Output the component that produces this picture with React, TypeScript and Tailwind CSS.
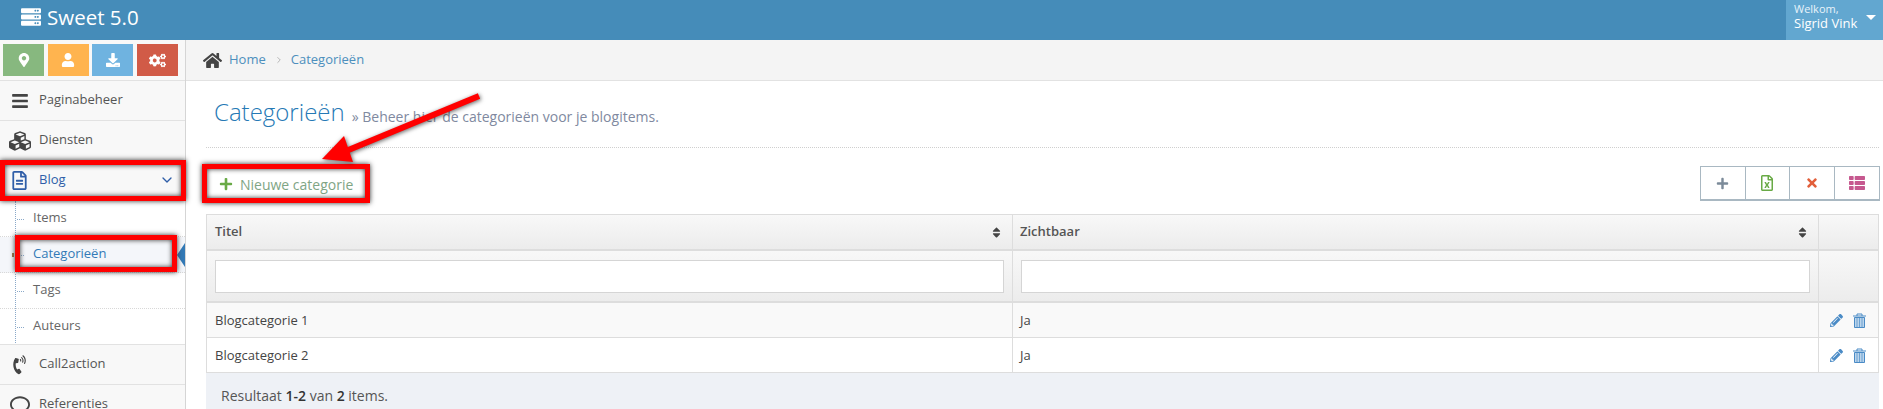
import { FaCogs, FaCubes, FaDownload, FaHome, FaMapMarkerAlt, FaPencilAlt, FaPlus, FaRegComment, FaRegFileAlt, FaRegFileExcel, FaServer, FaSort, FaThList, FaTimes, FaUser, FaBars, FaPhoneVolume } from "react-icons/fa";
import { LuChevronDown, LuChevronRight } from "react-icons/lu";

function TrashIcon() {
  return (
    <svg width="13" height="15" viewBox="0 0 13 15" className="text-[#4a8bc6]">
      <path d="M0 3h13M4 3V1h5v2" fill="none" stroke="currentColor" />
      <path d="M1.500 4.500h10v10h-10z" fill="#bcd5ec" stroke="currentColor" />
      <path d="M4 5v9M6.500 5v9M9 5v9" stroke="currentColor" strokeOpacity="0.7" />
    </svg>
  );
}

function MenuItem({ icon, label, active }: { icon: React.ReactNode; label: string; active?: boolean }) {
  return (
    <div className="h-10 flex items-center border-b border-[#e2e2e2] bg-[#f8f8f8] relative shrink-0">
      <div className="w-[39px] flex justify-center text-[#444] text-[18px]">{icon}</div>
      <span className={active ? "text-[#2f5ea8] text-[13px] pb-[2px]" : "text-[#555] text-[13px] pb-[2px]"}>{label}</span>
      {active && <LuChevronDown className="absolute right-[10px] top-[11px] text-[#2f5ea8] text-[16px]" />}
    </div>
  );
}

function SubItem({ label, active, last }: { label: string; active?: boolean; last?: boolean }) {
  return (
    <div className={`h-9 flex items-center pl-[33px] pb-[1px] border-b text-[13px] relative ${last ? "border-[#e2e2e2]" : "border-dotted border-[#d8d8d8]"} ${active ? "bg-[#f4f6fa] text-[#337ab7]" : "text-[#666]"}`}>
      <span className="absolute left-[17px] top-[18px] w-[7px] border-t border-dotted border-[#8aa9c9]" />
      {label}
      {active && <span className="absolute left-[12px] top-[16px] w-[2px] h-[4px] bg-[#9a7b4f]" />}
      {active && <span className="absolute right-0 top-[6px] border-y-[12px] border-y-transparent border-r-[8px] border-r-[#337ab7]" />}
    </div>
  );
}

function RedBox({ className }: { className: string }) {
  return <div className={`absolute border-[5px] border-[#ff0000] shadow-[0_0_5px_#333,inset_0_0_5px_#333] ${className}`} />;
}

function ToolButton({ children, last }: { children: React.ReactNode; last?: boolean }) {
  return <div className={`w-[44.500px] flex items-center justify-center ${last ? "" : "border-r border-[#a9b8c2]"}`}>{children}</div>;
}

function Row({ label, odd }: { label: string; odd?: boolean }) {
  return (
    <div className={`h-[35px] flex items-center border-b border-[#ddd] text-[13px] text-[#444] ${odd ? "bg-[#f9f9f9]" : "bg-white"}`}>
      <div className="w-[806px] h-full flex items-center pl-[8px] pt-[1px] border-r border-[#ddd]">{label}</div>
      <div className="w-[806px] h-full flex items-center pl-[7px] pt-[1px] border-r border-[#ddd]">Ja</div>
      <div className="flex-1 flex items-center justify-end gap-[10px] pr-[12px] text-[#4a8bc6]">
        <FaPencilAlt className="text-[13px]" />
        <TrashIcon />
      </div>
    </div>
  );
}

export default function App() {
  return (
    <div className="relative w-[1883px] h-[409px] overflow-hidden bg-white font-['Open_Sans',sans-serif]">
      {/* Top bar */}
      <header className="h-10 bg-[#458cb9] flex items-center justify-between text-white">
        <div className="flex items-center pl-[21px] gap-[6px] pb-[6px]">
          <FaServer className="text-[20px]" />
          <span className="text-[20.500px] leading-none">Sweet 5.0</span>
        </div>
        <div className="w-[97px] h-10 bg-[#62a7d0] pl-2 relative leading-none">
          <div className="text-[11px] pt-[3px] text-[#e8f3fa]">Welkom,</div>
          <div className="text-[13px] pt-[3px]">Sigrid Vink</div>
          <span className="absolute right-[7px] top-[15px] border-x-[5px] border-x-transparent border-t-[5px] border-t-white" />
        </div>
      </header>

      <div className="flex h-[369px]">
        {/* Sidebar */}
        <aside className="w-[186px] shrink-0 border-r border-[#d5d5d5] flex flex-col">
          <div className="h-[41px] shrink-0 flex gap-[3.700px] pl-[3px] pt-[4px] border-b border-[#e2e2e2] bg-[#f8f8f8] text-white text-[14px]">
            <div className="w-[41px] h-[32px] bg-[#87b87f] flex items-center justify-center"><FaMapMarkerAlt /></div>
            <div className="w-[41px] h-[32px] bg-[#ffb44f] flex items-center justify-center"><FaUser /></div>
            <div className="w-[41px] h-[32px] bg-[#6fb3e0] flex items-center justify-center"><FaDownload /></div>
            <div className="w-[41px] h-[32px] bg-[#d15b47] flex items-center justify-center"><FaCogs className="text-[17px]" /></div>
          </div>
          <MenuItem icon={<FaBars />} label="Paginabeheer" />
          <MenuItem icon={<FaCubes className="text-[22px]" />} label="Diensten" />
          <MenuItem icon={<FaRegFileAlt className="text-[#2f5ea8] text-[19px]" />} label="Blog" active />
          <div className="relative bg-white shrink-0">
            <span className="absolute left-[15px] top-0 bottom-0 border-l border-dotted border-[#8aa9c9]" />
            <SubItem label="Items" />
            <SubItem label="Categorieën" active />
            <SubItem label="Tags" />
            <SubItem label="Auteurs" last />
          </div>
          <MenuItem icon={<FaPhoneVolume className="-rotate-12" />} label="Call2action" />
          <MenuItem icon={<FaRegComment className="text-[20px]" />} label="Referenties" />
        </aside>

        {/* Main */}
        <main className="flex-1 min-w-0">
          <nav className="h-[41px] bg-[#f4f4f4] border-b border-[#e2e2e2] flex items-center pl-[17px] text-[13px] text-[#4c8fbd]">
            <FaHome className="text-[#444] text-[19px] mr-[7px]" />
            <span>Home</span>
            <LuChevronRight className="ml-[8px] mr-[7px] text-[#aaa] text-[10px]" />
            <span>Categorieën</span>
          </nav>

          <div className="pl-[20px] pr-[4px]">
            <div className="h-[67px] flex items-center border-b border-dotted border-[#cfcfcf] pl-[8px] pb-[5px]">
              <h1 className="text-[24px] font-light text-[#2679b5]">Categorieën</h1>
              <span className="text-[14px] text-[#8089a0] ml-[7px] pt-[10px]">» Beheer hier de categorieën voor je blogitems.</span>
            </div>

            <div className="h-[66px] flex items-start justify-between">
              <button className="mt-[17px] h-[38px] flex items-center pl-[13px] gap-[7px] text-[14px] text-[#7fa585]">
                <FaPlus className="text-[#69aa46] text-[14px]" />
                Nieuwe categorie
              </button>
              <div className="mt-[18px] -mr-[1px] flex h-[35px] border border-b-[2px] border-[#a9b8c2]">
                <ToolButton><FaPlus className="text-[#7b8a99] text-[13px]" /></ToolButton>
                <ToolButton><FaRegFileExcel className="text-[#69aa46] text-[16px]" /></ToolButton>
                <ToolButton><FaTimes className="text-[#e25f3b] text-[14px]" /></ToolButton>
                <ToolButton last><FaThList className="text-[#c6588f] text-[16px]" /></ToolButton>
              </div>
            </div>

            {/* Table */}
            <div className="border border-[#ddd] border-b-0">
              <div className="h-[36px] flex items-center border-b-[2px] border-[#ddd] bg-gradient-to-b from-[#f8f8f8] to-[#ececec] text-[13px] font-semibold text-[#555]">
                <div className="w-[806px] h-full flex items-center justify-between pl-[8px] pr-[9px] border-r border-[#ddd]">Titel<FaSort className="text-[#444] text-[13px]" /></div>
                <div className="w-[806px] h-full flex items-center justify-between pl-[7px] pr-[9px] border-r border-[#ddd]">Zichtbaar<FaSort className="text-[#444] text-[13px]" /></div>
                <div className="flex-1" />
              </div>
              <div className="h-[52px] flex items-center border-b-[2px] border-[#ddd] bg-gradient-to-b from-[#f8f8f8] to-[#ececec]">
                <div className="w-[806px] h-full flex items-center px-[8px] border-r border-[#ddd]"><div className="w-full h-[33px] bg-white border border-[#d5d5d5]" /></div>
                <div className="w-[806px] h-full flex items-center px-[8px] border-r border-[#ddd]"><div className="w-full h-[33px] bg-white border border-[#d5d5d5]" /></div>
                <div className="flex-1" />
              </div>
              <Row label="Blogcategorie 1" odd />
              <Row label="Blogcategorie 2" />
            </div>
            <div className="h-[40px] bg-[#eef1f6] pl-[15px] pt-[12px] text-[14px] text-[#555]">
              Resultaat <b className="font-semibold text-[#333]">1-2</b> van <b className="font-semibold text-[#333]">2</b> items.
            </div>
          </div>
        </main>
      </div>

      {/* Red annotations */}
      <RedBox className="left-0 top-[160px] w-[186px] h-[41px]" />
      <RedBox className="left-[15px] top-[235px] w-[162px] h-[37px]" />
      <RedBox className="left-[202px] top-[164px] w-[168px] h-[39px]" />
      <svg className="absolute left-[310px] top-[85px] drop-shadow-[1px_1px_2px_rgba(0,0,0,0.6)]" width="180" height="80" viewBox="0 0 180 80">
        <path d="M169 11 L36 66" stroke="#ff0000" strokeWidth="6" fill="none" />
        <path d="M12 74 L34 51 L43 77 Z" fill="#ff0000" />
      </svg>
    </div>
  );
}
